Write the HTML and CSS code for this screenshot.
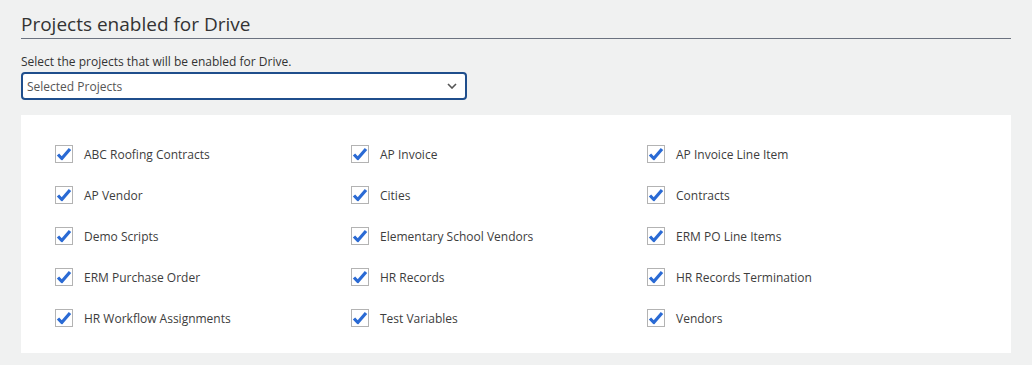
FILE: index.html
```html
<!DOCTYPE html>
<html lang="en">
<head>
  <meta charset="UTF-8">
  <meta name="viewport" content="width=device-width, initial-scale=1.0">
  <title>Drive Projects</title>
  <link rel="stylesheet" href="styles.css">
</head>
<body>
  <div class="section">
    <h2 class="section-title">Projects enabled for Drive</h2>

    <label class="field-label" for="project-select">Select the projects that will be enabled for Drive.</label>
    <div class="select-box" id="project-select">
      <span>Selected Projects</span>
      <svg class="chevron" width="10" height="6" viewBox="0 0 10 6"><path d="M1 1l4 4 4-4" fill="none" stroke="#555" stroke-width="1.6"/></svg>
    </div>

    <div class="project-panel">
      <div class="project-item"><span class="check"><svg viewBox="0 0 16 16"><path d="M2 8.5l3.8 4L14 3" /></svg></span>ABC Roofing Contracts</div>
      <div class="project-item"><span class="check"><svg viewBox="0 0 16 16"><path d="M2 8.5l3.8 4L14 3" /></svg></span>AP Invoice</div>
      <div class="project-item"><span class="check"><svg viewBox="0 0 16 16"><path d="M2 8.5l3.8 4L14 3" /></svg></span>AP Invoice Line Item</div>

      <div class="project-item"><span class="check"><svg viewBox="0 0 16 16"><path d="M2 8.5l3.8 4L14 3" /></svg></span>AP Vendor</div>
      <div class="project-item"><span class="check"><svg viewBox="0 0 16 16"><path d="M2 8.5l3.8 4L14 3" /></svg></span>Cities</div>
      <div class="project-item"><span class="check"><svg viewBox="0 0 16 16"><path d="M2 8.5l3.8 4L14 3" /></svg></span>Contracts</div>

      <div class="project-item"><span class="check"><svg viewBox="0 0 16 16"><path d="M2 8.5l3.8 4L14 3" /></svg></span>Demo Scripts</div>
      <div class="project-item"><span class="check"><svg viewBox="0 0 16 16"><path d="M2 8.5l3.8 4L14 3" /></svg></span>Elementary School Vendors</div>
      <div class="project-item"><span class="check"><svg viewBox="0 0 16 16"><path d="M2 8.5l3.8 4L14 3" /></svg></span>ERM PO Line Items</div>

      <div class="project-item"><span class="check"><svg viewBox="0 0 16 16"><path d="M2 8.5l3.8 4L14 3" /></svg></span>ERM Purchase Order</div>
      <div class="project-item"><span class="check"><svg viewBox="0 0 16 16"><path d="M2 8.5l3.8 4L14 3" /></svg></span>HR Records</div>
      <div class="project-item"><span class="check"><svg viewBox="0 0 16 16"><path d="M2 8.5l3.8 4L14 3" /></svg></span>HR Records Termination</div>

      <div class="project-item"><span class="check"><svg viewBox="0 0 16 16"><path d="M2 8.5l3.8 4L14 3" /></svg></span>HR Workflow Assignments</div>
      <div class="project-item"><span class="check"><svg viewBox="0 0 16 16"><path d="M2 8.5l3.8 4L14 3" /></svg></span>Test Variables</div>
      <div class="project-item"><span class="check"><svg viewBox="0 0 16 16"><path d="M2 8.5l3.8 4L14 3" /></svg></span>Vendors</div>
    </div>
  </div>
</body>
</html>
```

FILE: styles.css
```css
body {
  margin: 0;
  background: #f0f1f1;
  color: #333;
  font-family: "Open Sans", Arial, sans-serif;
}

.section {
  width: 990px;
  padding: 12px 0 0 21px;
}

.section-title {
  margin: 0;
  font-size: 19px;
  font-weight: 400;
  line-height: 24px;
  color: #333;
  padding-bottom: 2px;
  border-bottom: 1px solid #6b7280;
}

.field-label {
  display: block;
  margin-top: 15px;
  font-size: 12px;
  line-height: 16px;
  color: #333;
}

.select-box {
  box-sizing: border-box;
  width: 446px;
  height: 28px;
  margin-top: 2px;
  padding: 0 8px 0 4px;
  border: 2px solid #1f4e8c;
  border-radius: 4px;
  background: #fff;
  display: flex;
  align-items: center;
  justify-content: space-between;
  font-size: 12px;
  color: #555;
}

.project-panel {
  margin-top: 15px;
  background: #fff;
  padding: 30px 34px 26px;
  display: grid;
  grid-template-columns: repeat(3, 296px);
  row-gap: 23px;
}

.project-item {
  display: flex;
  align-items: center;
  height: 18px;
  font-size: 12px;
  color: #3d3d3d;
}

.check {
  box-sizing: border-box;
  width: 18px;
  height: 18px;
  margin-right: 11px;
  border: 1px solid #b3b3b3;
  background: #fff;
}

.check svg {
  display: block;
  width: 16px;
  height: 16px;
}

.check path {
  fill: none;
  stroke: #2a6ad4;
  stroke-width: 3.2;
  stroke-linejoin: round;
}
```
